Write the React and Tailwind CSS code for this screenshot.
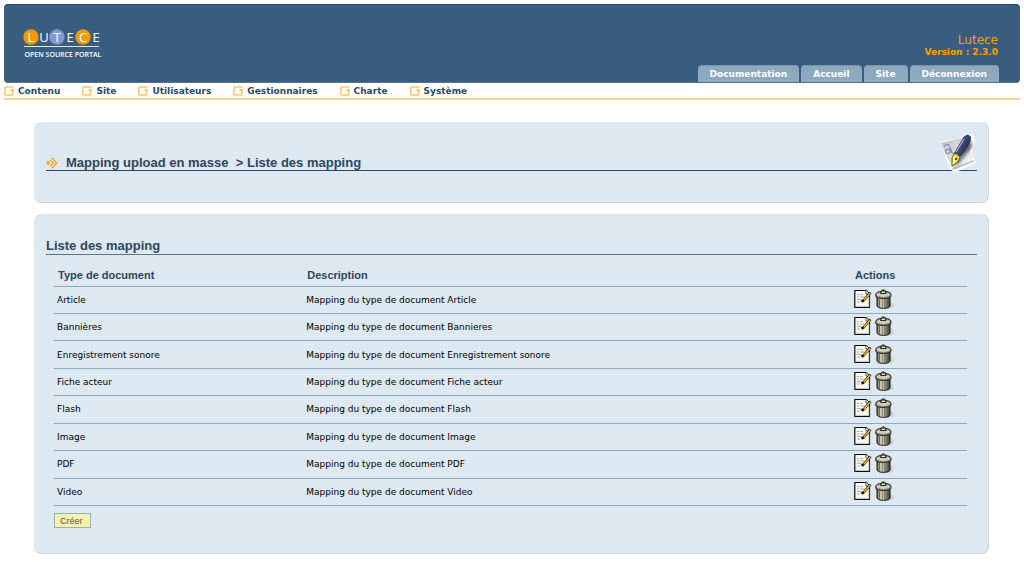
const tabs = ["Documentation", "Accueil", "Site", "Déconnexion"];
const menu = ["Contenu", "Site", "Utilisateurs", "Gestionnaires", "Charte", "Système"];
const rows = [
  ["Article", "Article"],
  ["Bannières", "Bannieres"],
  ["Enregistrement sonore", "Enregistrement sonore"],
  ["Fiche acteur", "Fiche acteur"],
  ["Flash", "Flash"],
  ["Image", "Image"],
  ["PDF", "PDF"],
  ["Video", "Video"],
];

function Logo() {
  const letters = [
    ["L", 8, "#f09a08"],
    ["U", 21, null],
    ["T", 34, "#8497d3"],
    ["E", 47, null],
    ["C", 60, "#f09a08"],
    ["E", 73, null],
  ];
  return (
    <svg width="80" height="34" viewBox="0 0 80 34" role="img" aria-label="Lutece Open Source Portal">
      {letters.map(([l, x, fill]) => (
        <g key={x}>
          {fill && <circle cx={x} cy="9" r="7.7" fill={fill} />}
          <text x={x} y="14" textAnchor="middle" fontSize="13" fill="#fff" fontFamily="'Open Sans', sans-serif">
            {l}
          </text>
        </g>
      ))}
      <path d="M1 18.5H76" stroke="#dfe7ee" />
      <text x="40" y="29" textAnchor="middle" fontSize="7" fontWeight="600" fill="#fff" fontFamily="'Open Sans', sans-serif">
        OPEN SOURCE PORTAL
      </text>
    </svg>
  );
}

function MenuIcon() {
  return (
    <svg width="10" height="10" viewBox="0 0 10 10" fill="none" aria-hidden="true">
      <path d="M9.500 1H2Q.8 1 .8 2.200V7.800Q.8 9 2 9H7.600Q8.800 9 8.800 7.800V3.500" stroke="#f9c765" strokeWidth="1.500" />
      <path d="M6.500 3.300H9.500V4.800H6.500Z" fill="#f2b040" />
    </svg>
  );
}

function ArrowIcon() {
  return (
    <svg width="12" height="12" viewBox="0 0 12 12" fill="none" aria-hidden="true">
      <path d="M0 6L2.200 3.800L4.400 6L2.200 8.200Z" fill="#f7a213" />
      <path d="M4 2.800L7.200 6L4 9.200" stroke="#f7a213" strokeWidth="1.200" />
      <path d="M5.500 .8L10.800 6L5.500 11.200" stroke="#f7a213" strokeWidth="1.300" />
    </svg>
  );
}

function PenIcon() {
  return (
    <svg width="38" height="40" viewBox="0 0 38 40" aria-hidden="true">
      <defs>
        <linearGradient id="paper" x1="0" y1="0" x2="1" y2="1">
          <stop offset="0" stopColor="#bcbec2" />
          <stop offset=".6" stopColor="#e6e6e6" />
          <stop offset="1" stopColor="#fff" />
        </linearGradient>
        <linearGradient id="barrel" x1="0" y1="0" x2="1" y2=".7">
          <stop offset="0" stopColor="#8b98c8" />
          <stop offset=".45" stopColor="#46528a" />
          <stop offset="1" stopColor="#171d3c" />
        </linearGradient>
        <filter id="soft" x="-40%" y="-40%" width="180%" height="180%">
          <feGaussianBlur stdDeviation="1.6" />
        </filter>
      </defs>
      <path d="M3 9L21 5L26 2Q31-1 34 3L34 12L31 20L36 28L16 37L12 34Z" fill="#fff" stroke="#fff" strokeWidth="2.500" strokeLinejoin="round" />
      <path d="M2 9L26 3L35 27L13 35Z" fill="url(#paper)" />
      <path d="M13 34L35 26L36 27L15 36Z" fill="#c4c4c4" />
      <path d="M32 5L33 13L20 29L14 33L22 22Z" fill="#111" opacity=".65" filter="url(#soft)" />
      <path d="M5 13Q7 9 10 11Q12 14 11 19M11 15Q5 15 7 19Q10 21 12 16Q13 21 17 19" fill="none" stroke="#8c8fb5" strokeWidth="1.3" />
      <path d="M25 3Q29-1 31.500 3Q32 7 29 12L22 22Q18 23 15.500 19Z" fill="url(#barrel)" stroke="#252d57" strokeWidth=".8" />
      <path d="M25 5L17 18" stroke="#aab5dc" strokeWidth="1.2" />
      <path d="M15.500 19Q19 20 21 23L19 28L13 32L13 24Z" fill="#e5d83a" stroke="#3f3b18" strokeWidth=".8" />
      <path d="M15 22L14.500 29L17 26" stroke="#fffbc4" strokeWidth="1.4" fill="none" />
      <circle cx="17" cy="25" r="1" fill="#222" />
    </svg>
  );
}

function EditIcon() {
  return (
    <svg width="18" height="20" viewBox="0 0 18 20" fill="none" aria-hidden="true">
      <path d="M.8 1.500H12L15.500 5V18.300H.8Z" fill="#f8f7f2" stroke="#0c0c0c" strokeWidth="1.2" strokeLinejoin="round" />
      <path d="M1.600 17.400H14.800V8" stroke="#cfcac0" />
      <path d="M12 1.500V5H15.500" fill="#fff" stroke="#333" strokeWidth=".8" />
      <path d="M3 5.500H5M6 5.500H9M3 8H5M6 8H10M3 10.500H7M3 13H6" stroke="#999" strokeWidth=".8" />
      <path d="M16.500 3.500L9.500 11.500L7.500 12.500" stroke="#111" strokeWidth="2.600" />
      <path d="M16.200 4L9.800 11.200" stroke="#f2b820" strokeWidth="1.500" />
    </svg>
  );
}

function TrashIcon() {
  return (
    <svg width="19" height="20" viewBox="0 0 19 20" aria-hidden="true">
      <defs>
        <linearGradient id="can">
          <stop offset="0" stopColor="#6d6b59" />
          <stop offset=".35" stopColor="#e6e3ce" />
          <stop offset=".6" stopColor="#a3a08b" />
          <stop offset="1" stopColor="#3c3b30" />
        </linearGradient>
      </defs>
      <path d="M14 11L18.500 15V18L15 19.800H6Z" fill="#c3c8cc" opacity=".7" />
      <path d="M2 8H15V17Q14 19.300 8.500 19.300Q3 19.300 2 17Z" fill="url(#can)" stroke="#15150f" />
      <path d="M4.500 10V17.800M7.200 10V18.500M9.900 10V18.500M12.600 10V17.800" stroke="#5c5b4e" strokeWidth=".8" />
      <path d="M.7 5.500Q1 2.500 8.300 2.300Q15.800 2.500 16 5.500V7.500Q14 9.500 8.300 9.500Q2.500 9.500 .7 7.500Z" fill="#8f8d7b" stroke="#15150f" strokeWidth=".9" />
      <ellipse cx="8.300" cy="5.600" rx="6.600" ry="2.400" fill="#cfcdbd" />
      <path d="M5.500 4.500Q5.500 .8 8.300 .8Q11.100 .8 11.100 4.500Z" fill="#77756a" stroke="#1b1b16" strokeWidth=".9" />
      <path d="M6.800 3.500H9.800" stroke="#eeeede" />
    </svg>
  );
}

export default function App() {
  return (
    <div className="bg-white p-1 font-['DejaVu_Sans',Verdana,sans-serif] text-[#2d475d]">
      <header className="flex h-[79px] items-stretch justify-between rounded-[4px] border-t border-b border-t-[#244d74] border-b-[#56758f] bg-[#385d7e] pl-[19px] pr-[21px]">
        <div className="pt-[23px]">
          <Logo />
        </div>
        <div className="flex flex-col items-end justify-end">
          <p className="pr-px text-[12px] leading-[14px] text-[#f8a000]">Lutece</p>
          <p className="mb-2 pr-px text-[9px] font-bold leading-[10px] text-[#f8a000]">Version : 2.3.0</p>
          <nav className="flex gap-[2px]">
            {tabs.map((t) => (
              <a key={t} href="#" className="h-[17px] rounded-t-[4px] border-t border-[#7897ae] bg-[#8da9bf] px-3 text-[9px] font-bold leading-[17px] text-white">
                {t}
              </a>
            ))}
          </nav>
        </div>
      </header>
      <nav className="flex h-[17px] items-center gap-[22px] border-b-2 border-[#fad590]">
        {menu.map((m) => (
          <a key={m} href="#" className="flex items-center gap-1 text-[9px] font-bold leading-3">
            <MenuIcon />
            {m}
          </a>
        ))}
      </nav>
      <main className="ml-[30px] mr-[31px] mt-[22px] flex flex-col gap-[11px]">
        <section className="rounded-[7px] border-b border-r border-[#ccd7df] bg-[#dde8f0] pb-[31px] pl-3 pr-[11px] pt-[10px]">
          <div className="flex h-[39px] items-end justify-between border-b border-[#2d4a64]">
            <h1 className="flex items-center gap-2 text-[13px] font-bold leading-[14px] font-['Liberation_Sans',Arial,sans-serif]">
              <ArrowIcon />
              <span>Mapping upload en masse&nbsp; &gt; Liste des mapping</span>
            </h1>
            <div className="relative -mb-1">
              <PenIcon />
            </div>
          </div>
        </section>
        <section className="rounded-[7px] border-b border-r border-[#ccd7df] bg-[#dde8f0] pb-[25px] pl-3 pr-[11px] pt-6">
          <h2 className="border-b border-[#5c758c] text-[13px] font-bold leading-4 font-['Liberation_Sans',Arial,sans-serif]">Liste des mapping</h2>
          <div className="px-2 pr-[10px] pt-[10px]">
            <table className="h-[241px] w-full table-fixed border-collapse text-left">
              <thead>
                <tr className="h-[21px] border-b border-[#8aa9c0] text-[11px] leading-[14px] font-['Liberation_Sans',Arial,sans-serif]">
                  <th className="w-[27.3%] px-1 py-0">Type de document</th>
                  <th className="px-1 py-0">Description</th>
                  <th className="w-[12.7%] px-1 py-0">Actions</th>
                </tr>
              </thead>
              <tbody className="text-[9px] leading-3 text-black">
                {rows.map(([type, name]) => (
                  <tr key={type} className="border-b border-[#8aa9c0]">
                    <td className="px-[3px] py-0">{type}</td>
                    <td className="px-[3px] py-0">Mapping du type de document {name}</td>
                    <td className="px-[3px] py-0">
                      <div className="flex gap-[3px] pb-[2px]">
                        <button type="button" aria-label={"Modifier " + type}><EditIcon /></button>
                        <button type="button" aria-label={"Supprimer " + type}><TrashIcon /></button>
                      </div>
                    </td>
                  </tr>
                ))}
              </tbody>
            </table>
            <button type="button" className="mt-[7px] block h-[15px] border border-[#92b0c5] bg-[#f8f1a9] pl-[5px] pr-[7px] text-[9px] leading-3 text-[#45595e] font-['Liberation_Sans',Arial,sans-serif]">
              Créer
            </button>
          </div>
        </section>
      </main>
    </div>
  );
}
